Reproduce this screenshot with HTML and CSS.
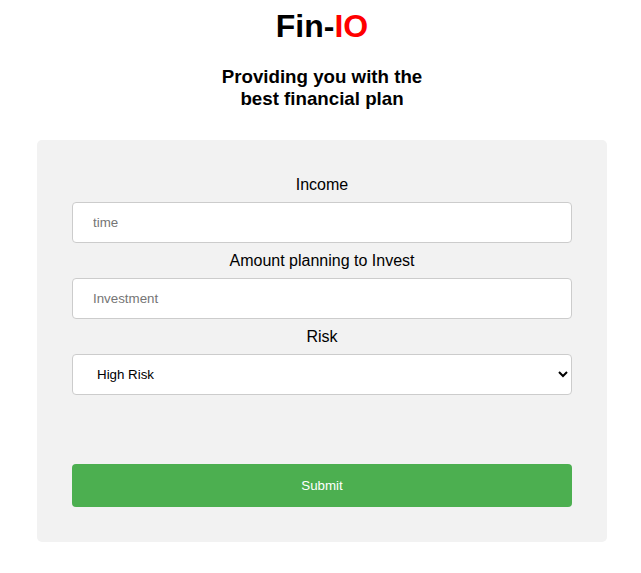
FILE: index.html
```html
<!DOCTYPE html>
<html lang="en">
<head>
<meta charset="utf-8">
<title>Fin-IO</title>
<link rel="stylesheet" href="styles.css">
</head>
<body>
  <h1 class="brand">Fin-<span class="brand-accent">IO</span></h1>
  <h3 class="tagline">Providing you with the best financial plan</h3>
  <div class="card">
    <form class="plan-form">
      <label class="field-label" for="income">Income</label>
      <input class="field" type="text" id="income" placeholder="time">
      <label class="field-label" for="invest">Amount planning to Invest</label>
      <input class="field" type="text" id="invest" placeholder="Investment">
      <label class="field-label" for="risk">Risk</label>
      <select class="field field-select" id="risk">
        <option>High Risk</option>
        <option>Medium Risk</option>
        <option>Low Risk</option>
      </select>
      <button class="submit" type="button">Submit</button>
    </form>
  </div>
</body>
</html>
```
FILE: styles.css
```css
body {
  margin: 8px 5px 8px 8px;
  font-family: "Liberation Sans", Arial, sans-serif;
  background: #fff;
  color: #000;
}
.brand {
  margin: 0;
  text-align: center;
  font-size: 32px;
  font-weight: bold;
}
.brand-accent {
  color: #ff0000;
}
.tagline {
  margin: 21px auto 30px;
  max-width: 230px;
  text-align: center;
  font-size: 18.72px;
  font-weight: bold;
}
.card {
  margin: 0 29px;
  background: #f2f2f2;
  border-radius: 5px;
  padding: 35px 35px 35px;
}
.plan-form {
  display: flex;
  flex-direction: column;
}
.field-label {
  display: block;
  text-align: center;
  font-size: 16px;
  line-height: 19px;
}
.field {
  display: block;
  width: 100%;
  height: 41px;
  box-sizing: border-box;
  margin: 8px 0;
  padding: 12px 20px;
  border: 1px solid #ccc;
  border-radius: 4px;
  background: #fff;
  font-family: "Liberation Sans", Arial, sans-serif;
  font-size: 13.33px;
  color: #000;
}
.field::placeholder {
  color: #757575;
}
.field-select {
  padding-top: 0;
  padding-bottom: 0;
  color: #000;
}
.submit {
  display: block;
  width: 100%;
  height: 43px;
  margin: 61px 0 0;
  padding: 0 20px;
  border: none;
  border-radius: 4px;
  background: #4caf50;
  color: #fff;
  font-family: "Liberation Sans", Arial, sans-serif;
  font-size: 13.33px;
  cursor: pointer;
}
```
